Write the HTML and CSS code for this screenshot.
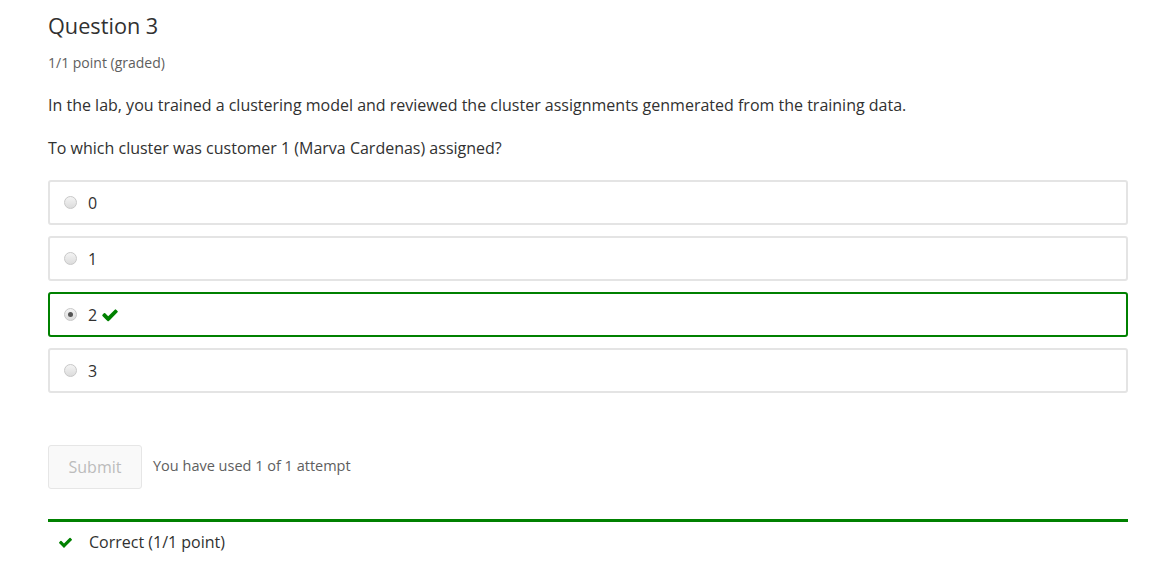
FILE: index.html
```html
<!DOCTYPE html>
<html>
<head>
<meta charset="utf-8">
<link rel="stylesheet" href="styles.css">
</head>
<body>
<div class="problem">
  <h3 class="title">Question 3</h3>
  <div class="points">1/1 point (graded)</div>
  <p class="text">In the lab, you trained a clustering model and reviewed the cluster assignments genmerated from the training data.</p>
  <p class="text q">To which cluster was customer 1 (Marva Cardenas) assigned?</p>
  <div class="options">
    <label class="option"><span class="radio"></span><span class="lbl">0</span></label>
    <label class="option"><span class="radio"></span><span class="lbl">1</span></label>
    <label class="option correct"><span class="radio checked"></span><span class="lbl">2</span>
      <svg class="check" viewBox="0 0 1792 1792" width="18" height="18"><path fill="#008100" d="M1671 566q0 40-28 68l-724 724-136 136q-28 28-68 28t-68-28l-136-136-362-362q-28-28-28-68t28-68l136-136q28-28 68-28t68 28l294 295 656-657q28-28 68-28t68 28l136 136q28 28 28 68z"/></svg>
    </label>
    <label class="option"><span class="radio"></span><span class="lbl">3</span></label>
  </div>
  <div class="actions">
    <button class="submit" disabled>Submit</button>
    <span class="attempts">You have used 1 of 1 attempt</span>
  </div>
  <div class="feedback">
    <svg class="fcheck" viewBox="0 0 1792 1792" width="15" height="15"><path fill="#008100" d="M1671 566q0 40-28 68l-724 724-136 136q-28 28-68 28t-68-28l-136-136-362-362q-28-28-28-68t28-68l136-136q28-28 68-28t68 28l294 295 656-657q28-28 68-28t68 28l136 136q28 28 28 68z"/></svg>
    <span class="ftext">Correct (1/1 point)</span>
  </div>
</div>
</body>
</html>
```
FILE: styles.css
```css
html, body {
  margin: 0;
  padding: 0;
  background: #fff;
}
body {
  font-family: "Open Sans", "Liberation Sans", sans-serif;
  color: #313131;
}
.problem {
  width: 1080px;
  padding: 11px 0 0 48px;
}
.title {
  margin: 0;
  font-size: 21.7px;
  font-weight: 400;
  line-height: 30px;
  color: #313131;
}
.points {
  margin-top: 12px;
  font-size: 14px;
  line-height: 20px;
  color: #5e5e5e;
}
.text {
  margin: 21px 0 0;
  font-size: 16px;
  line-height: 22px;
}
.text.q {
  margin-top: 21px;
}
.options {
  margin-top: 21px;
  display: flex;
  flex-direction: column;
  gap: 11px;
}
.option {
  box-sizing: border-box;
  height: 45px;
  border: 2px solid #e4e4e4;
  border-radius: 3px;
  display: flex;
  align-items: center;
  padding-left: 14px;
  font-size: 16px;
}
.option.correct {
  border-color: #008100;
}
.radio {
  box-sizing: border-box;
  width: 13px;
  height: 13px;
  border-radius: 50%;
  border: 1px solid #c8c8c8;
  background: linear-gradient(#f4f4f4, #dcdcdc);
  position: relative;
}
.radio.checked::after {
  content: "";
  position: absolute;
  left: 3px;
  top: 3px;
  width: 5px;
  height: 5px;
  border-radius: 50%;
  background: #555;
}
.lbl {
  margin-left: 11px;
}
.check {
  margin-left: 4px;
}
.actions {
  margin-top: 52px;
  display: flex;
  align-items: center;
}
.submit {
  box-sizing: border-box;
  width: 94px;
  height: 44px;
  border: 1px solid #e6e6e6;
  border-radius: 3px;
  background: #f9f9f9;
  color: #bcbcbc;
  font-family: "Open Sans", "Liberation Sans", sans-serif;
  font-size: 16px;
  padding: 0;
}
.attempts {
  margin-left: 11px;
  margin-top: -4px;
  font-size: 14.5px;
  color: #5e5e5e;
}
.feedback {
  margin-top: 30px;
  border-top: 3px solid #008100;
  display: flex;
  align-items: center;
  height: 40px;
  padding-left: 10px;
}
.ftext {
  margin-left: 16px;
  font-size: 16px;
}
```
